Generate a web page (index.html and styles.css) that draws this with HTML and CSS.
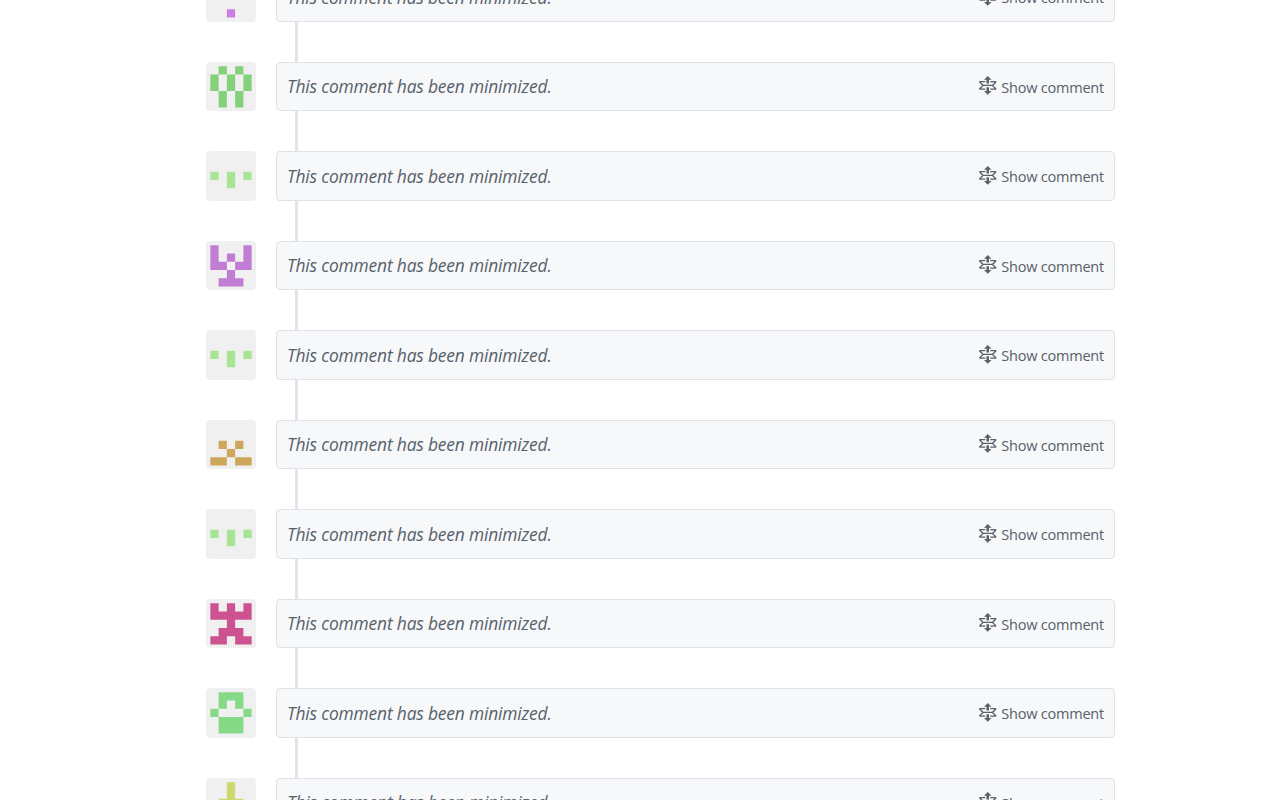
FILE: index.html
```html
<!DOCTYPE html>
<html lang="en">
<head>
<meta charset="utf-8">
<title>Discussion</title>
<link rel="stylesheet" href="styles.css">
</head>
<body>
<main class="timeline" id="timeline"></main>
<template id="comment">
  <article class="item">
    <svg class="avatar" viewBox="0 0 6 6"><path></path></svg>
    <div class="thread">
      <div class="card">
        <em class="message">This comment has been minimized.</em>
        <span class="show"><svg class="unfold" viewBox="0 0 14 16"><path d="M11.5 7.5L14 10c0 .55-.45 1-1 1H9v-1h3.5l-2-2h-7l-2 2H5v1H1c-.55 0-1-.45-1-1l2.5-2.5L0 5c0-.55.45-1 1-1h4v1H1.5l2 2h7l2-2H9V4h4c.55 0 1 .45 1 1l-2.5 2.5zM6 6h2V3h2L7 0 4 3h2v3zm2 3H6v3H4l3 3 3-3H8V9z"/></svg><span class="label">Show comment</span></span>
      </div>
    </div>
  </article>
</template>
<script src="app.js"></script>
</body>
</html>
```
FILE: app.js
```js
// Each identicon is five rows of five cells.
const avatars = [
  ['#cb7ee5', '..... ..... ..... ..... ..#..'],
  ['#84d17c', '.#.#. #.#.# #.#.# .#.#. .#.#.'],
  ['#a8e592', '..... ..... #.#.# ..#.. .....'],
  ['#c07dd3', '#...# #.#.# ##.## ..#.. .###.'],
  ['#a8e592', '..... ..... #.#.# ..#.. .....'],
  ['#cfa75c', '..... ..... .#.#. ..#.. ##.##'],
  ['#a8e592', '..... ..... #.#.# ..#.. .....'],
  ['#cc5290', '#.#.# ##### ..#.. .###. ##.##'],
  ['#86d986', '.###. .#.#. #...# .###. .###.'],
  ['#cdd86f', '..#.. ..#.. .###. ..#.. ..#..']
];
const template = document.getElementById('comment');
const timeline = document.getElementById('timeline');
for (const [color, grid] of avatars) {
  const item = template.content.cloneNode(true);
  const path = item.querySelector('.avatar path');
  let d = '';
  grid.split(' ').forEach((row, y) => [...row].forEach((cell, x) => {
    if (cell === '#') d += `M${x + 0.5} ${y + 0.5}h1v1h-1z`;
  }));
  path.setAttribute('d', d);
  path.setAttribute('fill', color);
  timeline.append(item);
}
```
FILE: styles.css
```css
body {
  margin: 0;
  height: 800px;
  overflow: hidden;
  background: #fff;
  color: #586069;
  font-family: "Open Sans", "Noto Sans", sans-serif;
}
.timeline {
  width: 909px;
  height: 847.7px;
  overflow: hidden;
  margin-left: 206px;
  margin-top: -47.7px;
}
.item {
  display: flex;
  gap: 20px;
  height: 89.5px;
}
.avatar {
  box-sizing: border-box;
  flex: none;
  width: 50px;
  height: 49.6px;
  margin-top: 19.7px;
  background: #f0f0f0;
  border-radius: 4px;
}
.thread {
  box-sizing: border-box;
  flex: 1;
  padding: 19.8px 0;
  background: linear-gradient(#e1e4e8, #e1e4e8) 19px 0 / 3px 100% no-repeat;
}
.card {
  box-sizing: border-box;
  display: flex;
  align-items: center;
  justify-content: space-between;
  height: 49.6px;
  padding: 0 10px;
  background: #f6f8fa;
  border: 1px solid #dfe2e6;
  border-radius: 4px;
}
.message {
  font-size: 17.4px;
  letter-spacing: -0.17px;
  white-space: nowrap;
}
.show {
  display: flex;
  align-items: center;
  gap: 4.7px;
  font-size: 14.5px;
  letter-spacing: -0.22px;
  white-space: nowrap;
}
.unfold {
  width: 17.5px;
  height: 20px;
  fill: #586069;
}
.label {
  padding-top: 1.4px;
}
```
